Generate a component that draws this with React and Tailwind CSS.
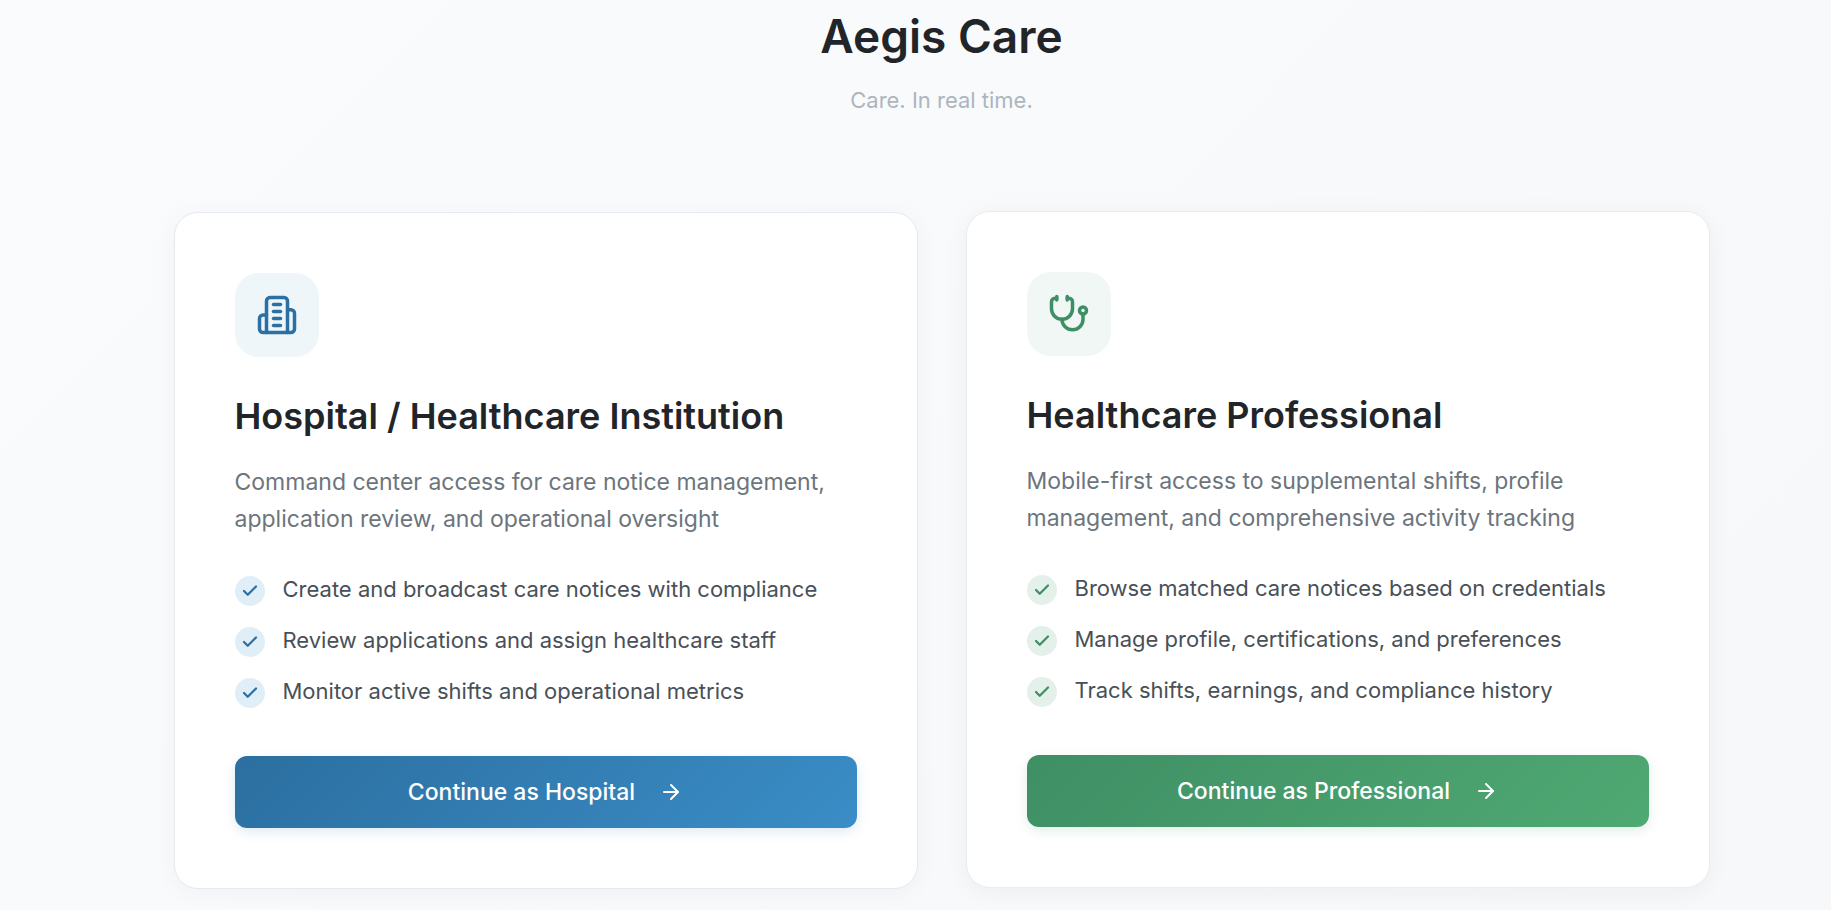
import { ArrowRight, Check, Stethoscope } from "lucide-react";

function HospitalIcon({ className }) {
  return (
    <svg
      viewBox="0 0 24 24"
      fill="none"
      stroke="currentColor"
      strokeWidth="2"
      strokeLinecap="round"
      strokeLinejoin="round"
      className={className}
      aria-hidden="true"
    >
      <path d="M6 22V4a2 2 0 0 1 2-2h8a2 2 0 0 1 2 2v18Z" />
      <path d="M6 12H4a2 2 0 0 0-2 2v6a2 2 0 0 0 2 2h2" />
      <path d="M18 9h2a2 2 0 0 1 2 2v9a2 2 0 0 1-2 2h-2" />
      <path d="M10 6h4" />
      <path d="M10 10h4" />
      <path d="M10 14h4" />
      <path d="M10 18h4" />
    </svg>
  );
}

const roles = [
  {
    title: "Hospital / Healthcare Institution",
    description:
      "Command center access for care notice management, application review, and operational oversight",
    features: [
      "Create and broadcast care notices with compliance",
      "Review applications and assign healthcare staff",
      "Monitor active shifts and operational metrics",
    ],
    action: "Continue as Hospital",
    Icon: HospitalIcon,
    card: "border-[#e6eaee] shadow-[0_4px_24px_rgba(33,37,41,0.04)]",
    tile: "bg-[#eef6fa] text-[#2c6fa3]",
    badge: "bg-[#e0eff7] text-[#2c6fa3]",
    button:
      "from-[#2c6fa0] to-[#3a8dc7] shadow-[0_4px_12px_rgba(44,111,160,0.15)]",
  },
  {
    title: "Healthcare Professional",
    description:
      "Mobile-first access to supplemental shifts, profile management, and comprehensive activity tracking",
    features: [
      "Browse matched care notices based on credentials",
      "Manage profile, certifications, and preferences",
      "Track shifts, earnings, and compliance history",
    ],
    action: "Continue as Professional",
    Icon: Stethoscope,
    card: "-translate-y-px border-[#e9edf0] shadow-[0_4px_24px_rgba(33,37,41,0.05)]",
    tile: "bg-[#f0f7f5] text-[#3d8f65]",
    badge: "bg-[#e3f1ea] text-[#3d8f65]",
    button:
      "from-[#3f8f65] to-[#4fa972] shadow-[0_4px_12px_rgba(63,143,101,0.15)]",
  },
];

function RoleCard({ role }) {
  const { Icon } = role;
  return (
    <section
      className={`flex flex-col rounded-3xl border bg-white p-[60px] ${role.card}`}
    >
      <div
        className={`flex size-[84px] items-center justify-center rounded-3xl ${role.tile}`}
      >
        <Icon className="size-[42px]" />
      </div>
      <h2 className="mt-8 text-4xl leading-[54px] font-semibold text-[#212529]">
        {role.title}
      </h2>
      <p className="mt-[21px] text-[23px] leading-[37px] text-[#6c757d]">
        {role.description}
      </p>
      <ul className="mt-[34px] flex flex-col gap-4 text-[22px] leading-[35px] text-[#495057]">
        {role.features.map((feature) => (
          <li key={feature} className="flex items-start gap-[18px]">
            <span
              className={`mt-1 flex size-[30px] shrink-0 items-center justify-center rounded-full ${role.badge}`}
            >
              <Check className="size-[18px]" strokeWidth={3} />
            </span>
            {feature}
          </li>
        ))}
      </ul>
      <button
        type="button"
        className={`mt-[47px] flex h-[72px] items-center justify-center gap-6 rounded-xl bg-linear-135 text-[23px] font-medium text-white ${role.button}`}
      >
        {role.action}
        <ArrowRight className="size-6" />
      </button>
    </section>
  );
}

export default function App() {
  return (
    <main className="min-h-screen bg-linear-135 from-[#fafbfd] to-[#f6f8fa] pr-12 pl-[100px] font-[Inter,sans-serif]">
      <header className="flex flex-col items-center pt-1 text-center">
        <h1 className="text-[46px] leading-[64px] font-semibold text-[#212529]">
          Aegis Care
        </h1>
        <p className="mt-4 text-[22px] leading-[32px] text-[#adb5bd]">
          Care. In real time.
        </p>
      </header>
      <div className="mx-auto mt-24 grid max-w-screen-2xl grid-cols-2 gap-12">
        {roles.map((role) => (
          <RoleCard key={role.title} role={role} />
        ))}
      </div>
    </main>
  );
}
